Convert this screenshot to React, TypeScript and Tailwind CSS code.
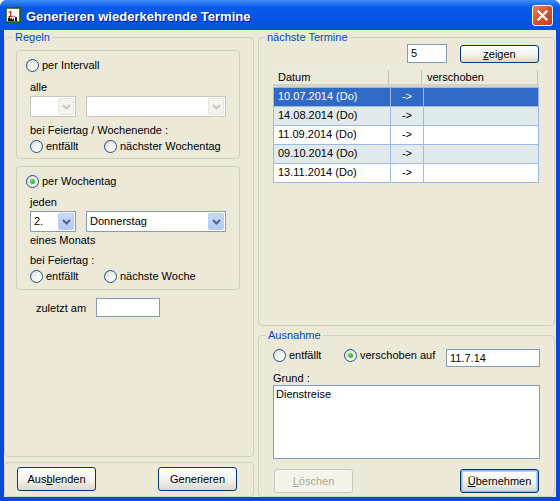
import clsx from 'clsx';

type RadioProps = { label: string; checked?: boolean; className?: string };

function Radio({ label, checked, className }: RadioProps) {
  return (
    <div className={clsx('flex items-center h-[14px] gap-[3px]', className)}>
      <span className="w-[13px] h-[13px] shrink-0 rounded-full border border-[#1C5180] bg-gradient-to-br from-[#D6D6D0] via-[#F4F4F1] to-white flex items-center justify-center">
        {checked && <span className="w-[5px] h-[5px] rounded-full bg-[radial-gradient(circle_at_35%_35%,#63E063,#1E9A1E)]" />}
      </span>
      <span className="leading-[14px] whitespace-nowrap">{label}</span>
    </div>
  );
}

function Chevron({ color }: { color: string }) {
  return (
    <svg width="9" height="6" viewBox="0 0 9 6">
      <path d="M1 1L4.5 4.5L8 1" fill="none" stroke={color} strokeWidth="2" />
    </svg>
  );
}

function Combo({ value, disabled, className }: { value?: string; disabled?: boolean; className?: string }) {
  return (
    <div
      className={clsx(
        'flex h-[21px] bg-white border p-[1px]',
        disabled ? 'border-[#C9C7BA]' : 'border-[#7F9DB9]',
        className
      )}
    >
      <span className="flex-1 pl-[2px] leading-[17px] whitespace-nowrap">{value}</span>
      <span
        className={clsx(
          'w-[16px] h-[17px] rounded-[2px] border flex items-center justify-center',
          disabled
            ? 'bg-[#F4F3EE] border-[#E6E4DA]'
            : 'bg-gradient-to-b from-[#CBDAFC] to-[#B3C8F5] border-[#BACDF6]'
        )}
      >
        <Chevron color={disabled ? '#C9C7BA' : '#4D6185'} />
      </span>
    </div>
  );
}

type BtnProps = {
  children: React.ReactNode;
  disabled?: boolean;
  primary?: boolean;
  small?: boolean;
  className?: string;
};

function XpButton({ children, disabled, primary, small, className }: BtnProps) {
  return (
    <button
      className={clsx(
        'w-[79px] rounded-[3px] border text-[11px]',
        small ? 'h-[18px] leading-[12px]' : 'h-[24px] leading-[14px]',
        disabled
          ? 'border-[#C9C7BA] text-[#ACA899] bg-[#F5F4EA]'
          : 'border-[#003C74] bg-gradient-to-b from-white via-[#F4F4F0] to-[#DCD8CD]',
        primary && 'shadow-[inset_0_0_0_1px_#8FB3E8,inset_0_0_0_2px_#BCD2F6]',
        className
      )}
    >
      {children}
    </button>
  );
}

function Input({ value, className }: { value?: string; className?: string }) {
  return (
    <div className={clsx('bg-white border border-[#7F9DB9] pl-[3px] leading-[16px] whitespace-nowrap', className)}>
      {value}
    </div>
  );
}

const rows = [
  '10.07.2014 (Do)',
  '14.08.2014 (Do)',
  '11.09.2014 (Do)',
  '09.10.2014 (Do)',
  '13.11.2014 (Do)',
];

function TitleIcon() {
  return (
    <svg width="16" height="16" viewBox="0 0 16 16">
      <rect x="0.5" y="0.5" width="15" height="15" fill="#4C7F34" stroke="#2D5A1E" />
      <rect x="2" y="2" width="12" height="12" fill="#fff" />
      <text x="3" y="9.5" fontSize="9" fontWeight="bold" fill="#E01010" fontFamily="Liberation Sans, sans-serif">
        1.
      </text>
      <path d="M3 14V11L5 10V12L7 11V13L9 11V14Z M10 14V10H12V14Z" fill="#111" />
    </svg>
  );
}

export default function App() {
  return (
    <div className="w-[560px] h-[501px] overflow-hidden flex flex-col bg-[#0A47DA] rounded-t-[7px] font-['Liberation_Sans',Arial,sans-serif] text-[11px] text-black">
      {/* Title bar */}
      <div className="h-[30px] shrink-0 flex items-center pl-[5px] pr-[7px] bg-gradient-to-b from-[#3D8EF8] via-[#0759EA] via-25% to-[#0352E0]">
        <TitleIcon />
        <span className="ml-[5px] mt-[3px] text-white font-bold text-[13px] [text-shadow:1px_1px_0_#0A1883]">
          Generieren wiederkehrende Termine
        </span>
        <div className="ml-auto w-[21px] h-[21px] rounded-[3px] border border-white bg-gradient-to-br from-[#E9805E] via-[#D9512B] to-[#C33B17] flex items-center justify-center">
          <svg width="11" height="11" viewBox="0 0 11 11">
            <path d="M1.5 1.5L9.5 9.5M9.5 1.5L1.5 9.5" stroke="#fff" strokeWidth="2.2" strokeLinecap="square" />
          </svg>
        </div>
      </div>

      {/* Client area */}
      <div className="flex-1 mx-[4px] mb-[4px] bg-[#ECE9D8] flex gap-[4px]">
        {/* Left column */}
        <div className="w-[250px] flex flex-col gap-[5px]">
          <fieldset className="flex-1 border border-[#D0D0BF] rounded-[4px] pl-[11px]">
            <legend className="ml-[-3px] px-[2px] text-[#0046D5] leading-[14px]">Regeln</legend>

            <div className="mt-[6px] w-[224px] border border-[#D0D0BF] rounded-[4px] pl-[9px] pt-[7px] pb-[5px]">
              <Radio label="per Intervall" />
              <div className="ml-[4px] mt-[8px] leading-[14px]">alle</div>
              <div className="ml-[4px] mt-[2px] flex gap-[10px]">
                <Combo disabled className="w-[46px]" />
                <Combo disabled className="w-[140px]" />
              </div>
              <div className="ml-[4px] mt-[6px] leading-[14px]">bei Feiertag / Wochenende :</div>
              <div className="ml-[4px] mt-[2px] flex">
                <Radio label="entfällt" className="w-[74px]" />
                <Radio label="nächster Wochentag" />
              </div>
            </div>

            <div className="mt-[7px] w-[224px] border border-[#D0D0BF] rounded-[4px] pl-[9px] pt-[7px] pb-[6px]">
              <Radio label="per Wochentag" checked />
              <div className="ml-[4px] mt-[7px] leading-[14px]">jeden</div>
              <div className="ml-[4px] mt-[2px] flex gap-[10px]">
                <Combo value="2." className="w-[46px]" />
                <Combo value="Donnerstag" className="w-[140px]" />
              </div>
              <div className="ml-[4px] mt-[1px] leading-[14px]">eines Monats</div>
              <div className="ml-[4px] mt-[6px] leading-[14px]">bei Feiertag :</div>
              <div className="ml-[4px] mt-[2px] flex">
                <Radio label="entfällt" className="w-[74px]" />
                <Radio label="nächste Woche" />
              </div>
            </div>

            <div className="mt-[8px] ml-[20px] flex items-center">
              <span className="w-[60px] leading-[14px]">zuletzt am</span>
              <Input className="w-[64px] h-[19px]" />
            </div>
          </fieldset>

          <div className="h-[35px] border border-[#D0D0BF] rounded-[4px] pl-[12px] pr-[16px] pt-[4px] flex justify-between items-start">
            <XpButton>
              Aus<span className="underline">b</span>lenden
            </XpButton>
            <XpButton>Generieren</XpButton>
          </div>
        </div>

        {/* Right column */}
        <div className="w-[297px] flex flex-col gap-[2px]">
          <fieldset className="h-[296px] border border-[#D0D0BF] rounded-[4px] pl-[14px] pr-[15px]">
            <legend className="ml-[-8px] px-[2px] text-[#0046D5] leading-[14px]">nächste Termine</legend>

            <div className="flex justify-end items-start gap-[13px]">
              <Input value="5" className="w-[40px] h-[19px]" />
              <XpButton small className="mt-[1px]">
                <span className="underline">z</span>eigen
              </XpButton>
            </div>

            <div className="mt-[7px] w-[266px]">
              <div className="h-[17px] flex bg-[#EBEADB] border-b-[3px] border-[#D6D2C2]">
                <div className="w-[116px] pl-[5px] leading-[14px] border-r border-[#C7C5B2]">Datum</div>
                <div className="w-[33px] border-r border-[#C7C5B2]" />
                <div className="w-[116px] pl-[5px] leading-[14px] border-r border-[#C7C5B2]">verschoben</div>
              </div>
              <div className="border-l border-t border-[#9DB9EB]">
                {rows.map((d, i) => (
                  <div
                    key={d}
                    className={clsx(
                      'h-[19px] flex border-b border-[#9DB9EB] leading-[16px]',
                      i === 0 ? 'bg-[#316AC5] text-white' : i % 2 === 1 ? 'bg-[#E1EBEB]' : 'bg-white'
                    )}
                  >
                    <div className="w-[117px] pl-[4px] border-r border-[#9DB9EB]">{d}</div>
                    <div className="w-[33px] text-center border-r border-[#9DB9EB]">-&gt;</div>
                    <div className="flex-1 border-r border-[#9DB9EB]" />
                  </div>
                ))}
              </div>
            </div>
          </fieldset>

          <fieldset className="flex-1 border border-[#D0D0BF] rounded-[4px] pl-[14px] pr-[14px]">
            <legend className="ml-[-7px] px-[2px] text-[#0046D5] leading-[14px]">Ausnahme</legend>

            <div className="mt-[6px] flex items-start">
              <Radio label="entfällt" className="w-[71px]" />
              <Radio label="verschoben auf" checked className="w-[102px]" />
              <Input value="11.7.14" className="w-[94px] h-[18px] mt-[1px]" />
            </div>
            <div className="mt-[4px] leading-[14px]">Grund :</div>
            <div className="w-[267px] h-[74px] bg-white border border-[#7F9DB9] pl-[2px] pt-[1px] leading-[14px]">
              Dienstreise
            </div>
            <div className="mt-[10px] flex justify-between pl-[1px] pr-[1px]">
              <XpButton disabled>
                <span className="underline">L</span>öschen
              </XpButton>
              <XpButton primary>
                <span className="underline">Ü</span>bernehmen
              </XpButton>
            </div>
          </fieldset>
        </div>
      </div>
    </div>
  );
}
